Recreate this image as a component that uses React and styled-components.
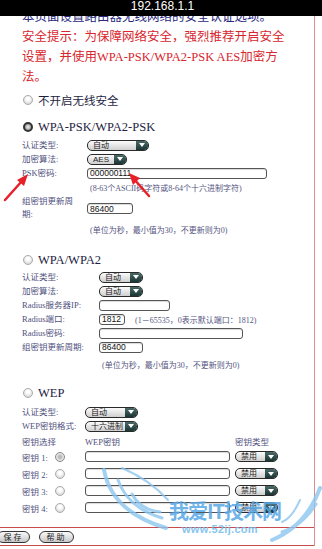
import React from "react";
import styled, { createGlobalStyle, css } from "styled-components";

const GlobalStyle = createGlobalStyle`
  html, body {
    margin: 0;
    padding: 0;
    background: #fff;
  }
  body {
    font-family: "Liberation Serif", "Noto Sans CJK SC", serif;
    color: #333;
  }
`;

const Page = styled.div`
  position: relative;
  width: 322px;
  height: 549px;
  overflow: hidden;
  background: #fff;
`;

// browser address bar, sits over the page
const TopBar = styled.div`
  position: absolute;
  top: 0;
  left: 0;
  right: 0;
  height: 16px;
  background: #000;
  color: #fff;
  font: 12px/12px "Liberation Sans", Arial, sans-serif;
  text-align: center;
  padding-left: 3px;
  z-index: 5;
`;

const Frame = styled.div`
  width: 314px;
  border-right: 1px solid #dc8c8c;
`;

const Intro = styled.div`
  padding: 7px 0 0 22px;
  font-size: 12.5px;
  line-height: 20px;
  white-space: nowrap;
`;

const IntroLine = styled.div`
  color: ${(p) => (p.$warn ? "#d8262e" : "#28287c")};
`;

const OptionRow = styled.div`
  display: flex;
  align-items: center;
  gap: 5px;
  height: 16px;
  padding-left: 23px;
  margin-top: ${(p) => p.$mt}px;
  font-size: ${(p) => p.$size || 12.5}px;
  color: #1e1e42;
  white-space: nowrap;
`;

const Radio = styled.span`
  flex: none;
  box-sizing: border-box;
  width: 10px;
  height: 10px;
  border-radius: 50%;
  border: 1px solid #aaa;
  background: radial-gradient(circle at 50% 35%, #fff 20%, #d8d8d8 80%);
  ${(p) =>
    p.$checked &&
    css`
      border: 2.5px solid #333;
      background: radial-gradient(circle, #ddd 20%, #888 90%);
    `}
  ${(p) =>
    p.$dim &&
    css`
      border-color: #888;
      background: radial-gradient(circle, #bbb 25%, #e6e6e6 60%);
    `}
`;

const Section = styled.div`
  padding-left: 22px;
  margin-top: ${(p) => p.$mt || 0}px;
`;

const Row = styled.div`
  display: flex;
  align-items: ${(p) => (p.$top ? "flex-start" : "center")};
  height: ${(p) => p.$h || 14}px;
  margin-top: ${(p) => p.$mt || 0}px;
  white-space: nowrap;
`;

const Label = styled.div`
  flex: none;
  width: ${(p) => p.$w}px;
  font-size: 8.5px;
  line-height: 13px;
  color: #50507e;
`;

const Hint = styled.div`
  margin-left: ${(p) => p.$ml}px;
  font-size: 8px;
  color: #55557f;
`;

const SelectBox = styled.div`
  flex: none;
  display: flex;
  box-sizing: border-box;
  width: ${(p) => p.$w}px;
  height: 11px;
  border: 1px solid #2a2a2a;
  border-radius: 5px;
  overflow: hidden;
  background: linear-gradient(#fbfbfb, #cfcfcf);
`;

const SelectText = styled.span`
  flex: 1;
  padding-left: 5px;
  font: 8px/9px "Liberation Sans", "Noto Sans CJK SC", sans-serif;
  color: #222;
`;

const SelectArrow = styled.span`
  flex: none;
  width: 12px;
  display: flex;
  align-items: center;
  justify-content: center;
  background: linear-gradient(#4b6a67, #1a3634);
  &::after {
    content: "";
    border-left: 3px solid transparent;
    border-right: 3px solid transparent;
    border-top: 4px solid #fff;
  }
`;

const TextInput = styled.input`
  flex: none;
  box-sizing: border-box;
  width: ${(p) => p.$w}px;
  height: 11px;
  margin: 0;
  margin-top: ${(p) => p.$mt || 0}px;
  padding: 0 2px;
  border: 1px solid #555;
  border-radius: 3px;
  background: #fff;
  box-shadow: inset 0 1px 1px rgba(0, 0, 0, 0.15);
  font: 8.5px "Liberation Sans", Arial, sans-serif;
  color: #111;
  outline: none;
`;

const KeyLabel = styled.div`
  flex: none;
  width: 33px;
  font-size: 8.5px;
  color: #50507e;
`;

const KeyRadioCell = styled.div`
  flex: none;
  width: 30px;
  display: flex;
`;

const KeyGap = styled.span`
  flex: none;
  width: 5px;
`;

const HeadCell = styled.div`
  flex: none;
  width: ${(p) => p.$w}px;
  font-size: 8.5px;
  color: #50507e;
`;

const Footer = styled.div`
  display: flex;
  gap: 9px;
  margin-top: 11px;
  padding: 3px 0 2px;
  border-top: 1px solid #c84c4c;
  border-bottom: 1px solid #c84c4c;
`;

const Button = styled.div`
  box-sizing: border-box;
  width: ${(p) => p.$w}px;
  height: 12px;
  margin-left: ${(p) => p.$ml || 0}px;
  border: 1px solid #333;
  border-radius: 6px;
  background: linear-gradient(#fafafa, #c8c8c8);
  font: 8px/10px "Noto Sans CJK SC", sans-serif;
  color: #222;
  text-align: center;
  letter-spacing: 2px;
`;

const Overlay = styled.svg`
  position: absolute;
  top: 0;
  left: 0;
  pointer-events: none;
`;

const Watermark = styled.div`
  position: absolute;
  left: 150px;
  top: 500px;
  width: 150px;
  text-align: center;
  pointer-events: none;
  color: #58a8e6;
  opacity: 0.85;
`;

const WatermarkTitle = styled.div`
  font: bold 20px/22px "Noto Sans CJK SC", sans-serif;
  letter-spacing: -1px;
`;

const WatermarkUrl = styled.div`
  margin-top: 2px;
  margin-left: -10px;
  font: bold 11px/11px "Liberation Sans", sans-serif;
  color: #74bced;
  letter-spacing: 0.3px;
`;

function Select({ w, value }) {
  return (
    <SelectBox $w={w}>
      <SelectText>{value}</SelectText>
      <SelectArrow />
    </SelectBox>
  );
}

function KeyRow({ n, dim }) {
  return (
    <Row $h={17}>
      <KeyLabel>密钥 {n}:</KeyLabel>
      <KeyRadioCell>
        <Radio $dim={dim} />
      </KeyRadioCell>
      <TextInput $w={145} defaultValue="" readOnly />
      <KeyGap />
      <Select w={43} value="禁用" />
    </Row>
  );
}

export default function App() {
  return (
    <Page>
      <GlobalStyle />
      <TopBar>192.168.1.1</TopBar>
      <Frame>
        <Intro>
          <IntroLine>本页面设置路由器无线网络的安全认证选项。</IntroLine>
          <IntroLine $warn>安全提示：为保障网络安全，强烈推荐开启安全</IntroLine>
          <IntroLine $warn>设置，并使用WPA-PSK/WPA2-PSK AES加密方</IntroLine>
          <IntroLine $warn>法。</IntroLine>
        </Intro>

        <OptionRow $mt={5} $size={11.5}>
          <Radio />
          不开启无线安全
        </OptionRow>

        <OptionRow $mt={11}>
          <Radio $checked />
          WPA-PSK/WPA2-PSK
        </OptionRow>
        <Section $mt={3}>
          <Row>
            <Label $w={65}>认证类型:</Label>
            <Select w={62} value="自动" />
          </Row>
          <Row>
            <Label $w={65}>加密算法:</Label>
            <Select w={40} value="AES" />
          </Row>
          <Row>
            <Label $w={65}>PSK密码:</Label>
            <TextInput $w={180} defaultValue="000000111" readOnly />
          </Row>
          <Row>
            <Hint $ml={68}>(8-63个ASCII码字符或8-64个十六进制字符)</Hint>
          </Row>
          <Row $top $h={26} $mt={1}>
            <Label $w={65}>
              组密钥更新周
              <br />
              期:
            </Label>
            <TextInput $w={46} $mt={8} defaultValue="86400" readOnly />
          </Row>
          <Row $mt={1}>
            <Hint $ml={68}>(单位为秒，最小值为30，不更新则为0)</Hint>
          </Row>
        </Section>

        <OptionRow $mt={16}>
          <Radio />
          WPA/WPA2
        </OptionRow>
        <Section $mt={2}>
          <Row>
            <Label $w={77}>认证类型:</Label>
            <Select w={44} value="自动" />
          </Row>
          <Row>
            <Label $w={77}>加密算法:</Label>
            <Select w={44} value="自动" />
          </Row>
          <Row>
            <Label $w={77}>Radius服务器IP:</Label>
            <TextInput $w={71} defaultValue="" readOnly />
          </Row>
          <Row>
            <Label $w={77}>Radius端口:</Label>
            <TextInput $w={26} defaultValue="1812" readOnly />
            <Hint $ml={10}>(1－65535，0表示默认端口：1812)</Hint>
          </Row>
          <Row>
            <Label $w={77}>Radius密码:</Label>
            <TextInput $w={144} defaultValue="" readOnly />
          </Row>
          <Row>
            <Label $w={77}>组密钥更新周期:</Label>
            <TextInput $w={44} defaultValue="86400" readOnly />
          </Row>
          <Row $mt={3}>
            <Hint $ml={80}>(单位为秒，最小值为30，不更新则为0)</Hint>
          </Row>
        </Section>

        <OptionRow $mt={14}>
          <Radio />
          WEP
        </OptionRow>
        <Section $mt={4}>
          <Row>
            <Label $w={63}>认证类型:</Label>
            <Select w={53} value="自动" />
          </Row>
          <Row>
            <Label $w={63}>WEP密钥格式:</Label>
            <Select w={53} value="十六进制" />
          </Row>
          <Row $mt={1}>
            <HeadCell $w={63}>密钥选择</HeadCell>
            <HeadCell $w={150}>WEP密钥</HeadCell>
            <HeadCell $w={50}>密钥类型</HeadCell>
          </Row>
          <KeyRow n={1} dim />
          <KeyRow n={2} />
          <KeyRow n={3} />
          <KeyRow n={4} />
        </Section>

        <Footer>
          <Button $w={33} $ml={-3}>
            保存
          </Button>
          <Button $w={35}>帮助</Button>
        </Footer>
      </Frame>

      <Overlay width="322" height="549" viewBox="0 0 322 549">
        {/* watermark wings */}
        <g fill="none" stroke="#8cc6f0" strokeLinecap="round" opacity="0.8">
          <path d="M104 470 Q112 512 166 528" strokeWidth="4" />
          <path d="M118 480 Q128 508 162 518" strokeWidth="3" />
          <path d="M132 494 Q140 510 160 512" strokeWidth="3" />
          <path d="M122 468 Q150 480 168 500" strokeWidth="2" />
          <path d="M320 488 Q306 526 272 540" strokeWidth="4" />
          <path d="M316 504 Q302 526 282 532" strokeWidth="3" />
          <path d="M300 500 Q292 518 282 522" strokeWidth="2" />
        </g>
        {/* red arrows */}
        <g stroke="#e8202a" strokeWidth="2.5" strokeLinecap="round" fill="#e8202a">
          <line x1="5" y1="200" x2="22" y2="181" />
          <polygon points="28,174 17,180 24,186" stroke="none" />
          <line x1="149" y1="196" x2="134" y2="179" />
          <polygon points="129,173 133,185 140,178" stroke="none" />
        </g>
      </Overlay>

      <Watermark>
        <WatermarkTitle>我爱IT技术网</WatermarkTitle>
        <WatermarkUrl>www.52ij.com</WatermarkUrl>
      </Watermark>
    </Page>
  );
}
